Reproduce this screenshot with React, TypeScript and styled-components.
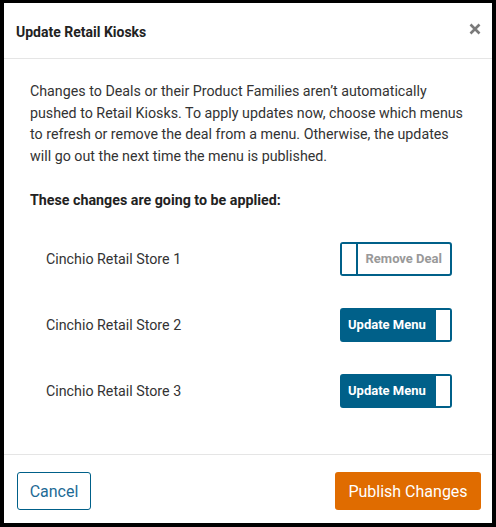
import styled, { createGlobalStyle } from "styled-components";

const BLUE = "#006089";
const ORANGE = "#e06c00";

const GlobalStyle = createGlobalStyle`
  html, body {
    margin: 0;
    padding: 0;
    background: #000;
  }
  body {
    font-family: Roboto, "Liberation Sans", Arial, sans-serif;
    color: #333;
  }
`;

const Frame = styled.div`
  padding: 3px 4px 4px 4px;
  height: 527px;
  box-sizing: border-box;
`;

const Dialog = styled.div`
  background: #fff;
  height: 520px;
  display: flex;
  flex-direction: column;
`;

const Header = styled.div`
  display: flex;
  align-items: center;
  justify-content: space-between;
  height: 56px;
  padding: 2px 9px 0 12px;
  box-sizing: border-box;
  border-bottom: 1px solid #e5e5e5;
`;

const Title = styled.h1`
  margin: 0;
  font-size: 14px;
  font-weight: 700;
  color: #222;
`;

const CloseButton = styled.button`
  background: none;
  border: none;
  padding: 0;
  width: 16px;
  height: 16px;
  margin-top: -6px;
  display: flex;
  align-items: center;
  justify-content: center;
  cursor: pointer;
`;

const Body = styled.div`
  flex: 1;
  padding: 22px 26px 0 26px;
  border-bottom: 1px solid #e5e5e5;
`;

const Intro = styled.p`
  margin: 0;
  font-size: 14.25px;
  line-height: 21.7px;
  color: #333;
`;

const Subhead = styled.p`
  margin: 24px 0 0 0;
  font-size: 14.25px;
  font-weight: 700;
  color: #222;
`;

const StoreList = styled.div`
  display: flex;
  flex-direction: column;
  gap: 32px;
  margin-top: 34px;
  padding: 0 14px 0 16px;
`;

const StoreRow = styled.div`
  display: flex;
  align-items: center;
  justify-content: space-between;
  height: 34px;
`;

const StoreName = styled.span`
  font-size: 14.25px;
  color: #333;
`;

const Toggle = styled.button<{ $on: boolean }>`
  display: flex;
  flex-direction: ${(p) => (p.$on ? "row" : "row-reverse")};
  align-items: stretch;
  justify-content: space-between;
  width: 112px;
  height: 34px;
  box-sizing: border-box;
  padding: 0;
  border: 2px solid ${BLUE};
  border-radius: 3px;
  background: ${(p) => (p.$on ? BLUE : "#fff")};
  cursor: pointer;
  font-family: inherit;
`;

const ToggleLabel = styled.span<{ $on: boolean }>`
  display: flex;
  align-items: center;
  padding: ${(p) => (p.$on ? "0 0 0 6px" : "0 8px 0 0")};
  font-size: 13px;
  font-weight: 700;
  color: ${(p) => (p.$on ? "#fff" : "#999")};
`;

const Thumb = styled.span<{ $on: boolean }>`
  width: 14px;
  background: #fff;
  border-${(p) => (p.$on ? "left" : "right")}: 2px solid ${BLUE};
`;

const Footer = styled.div`
  display: flex;
  align-items: flex-start;
  justify-content: space-between;
  height: 68px;
  box-sizing: border-box;
  padding: 17px 11px 0 13px;
`;

const BaseButton = styled.button`
  height: 38px;
  box-sizing: border-box;
  border-radius: 3px;
  font-family: inherit;
  font-size: 16px;
  cursor: pointer;
`;

const CancelButton = styled(BaseButton)`
  width: 74px;
  background: #fff;
  color: #1d6a95;
  border: 1px solid ${BLUE};
`;

const PublishButton = styled(BaseButton)`
  width: 146px;
  background: ${ORANGE};
  color: #fff;
  border: none;
`;

const stores = [
  { name: "Cinchio Retail Store 1", on: false, label: "Remove Deal" },
  { name: "Cinchio Retail Store 2", on: true, label: "Update Menu" },
  { name: "Cinchio Retail Store 3", on: true, label: "Update Menu" },
];

export default function App() {
  return (
    <>
      <GlobalStyle />
      <Frame>
        <Dialog role="dialog">
          <Header>
            <Title>Update Retail Kiosks</Title>
            <CloseButton aria-label="Close">
              <svg width="12" height="12" viewBox="0 0 12 12">
                <path
                  d="M1.5 1.5 L10.5 10.5 M10.5 1.5 L1.5 10.5"
                  stroke="#7a7a7a"
                  strokeWidth="2.6"
                />
              </svg>
            </CloseButton>
          </Header>
          <Body>
            <Intro>
              Changes to Deals or their Product Families aren’t automatically
              pushed to Retail Kiosks. To apply updates now, choose which menus
              to refresh or remove the deal from a menu. Otherwise, the updates
              will go out the next time the menu is published.
            </Intro>
            <Subhead>These changes are going to be applied:</Subhead>
            <StoreList>
              {stores.map((s) => (
                <StoreRow key={s.name}>
                  <StoreName>{s.name}</StoreName>
                  <Toggle $on={s.on}>
                    <ToggleLabel $on={s.on}>{s.label}</ToggleLabel>
                    <Thumb $on={s.on} />
                  </Toggle>
                </StoreRow>
              ))}
            </StoreList>
          </Body>
          <Footer>
            <CancelButton>Cancel</CancelButton>
            <PublishButton>Publish Changes</PublishButton>
          </Footer>
        </Dialog>
      </Frame>
    </>
  );
}
